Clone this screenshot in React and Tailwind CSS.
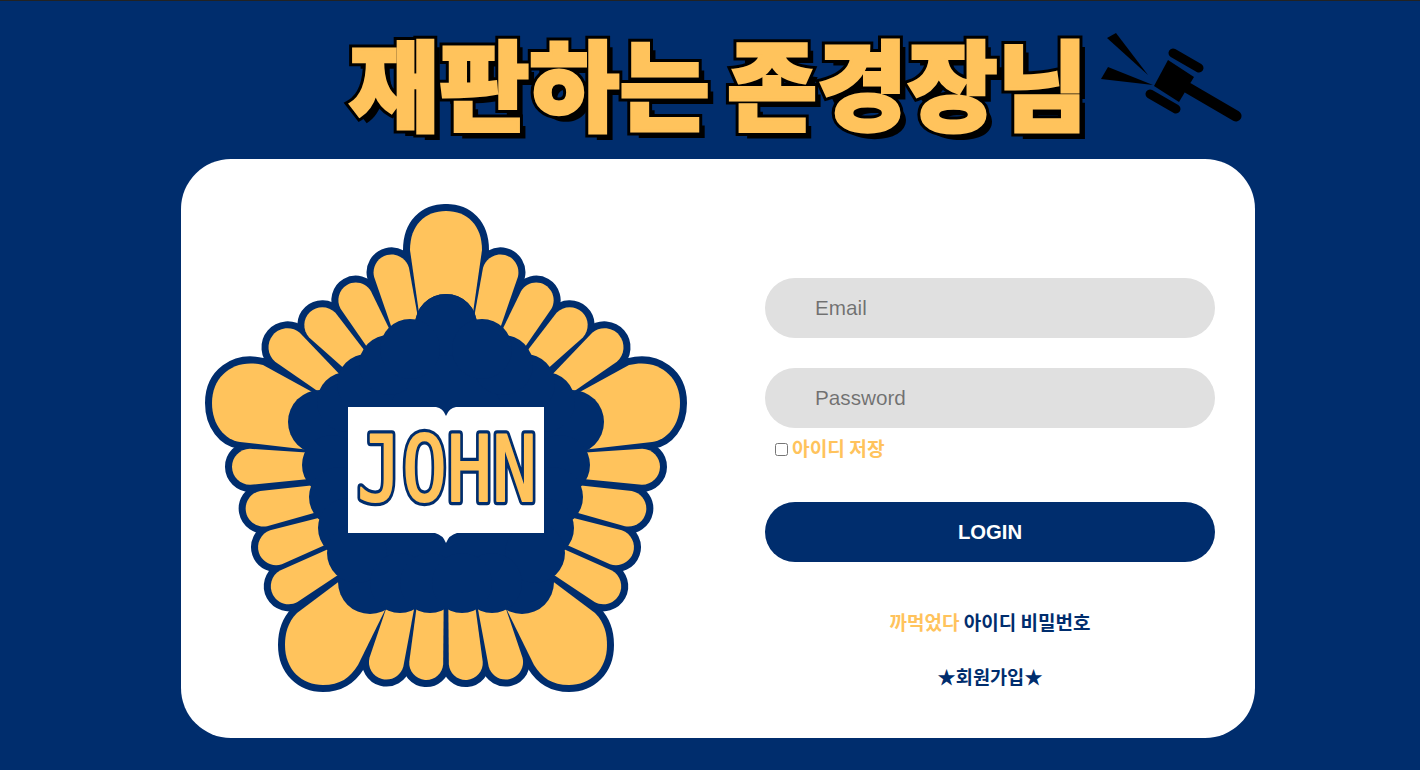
const NAVY = "#002d6d";
const GOLD = "#ffc35c";

// base centre, tip point, tip width, base width
const smallPetals = [
  [[327, 381], [273, 335], 38, 27],
  [[353, 358], [310, 312], 36, 27],
  [[378, 338], [347, 285], 35, 28],
  [[404, 320], [387, 255], 36, 28],
  [[302, 466], [232, 467], 36, 27],
  [[313, 499], [246, 512], 36, 27],
  [[323, 531], [259, 553], 36, 27],
  [[333, 562], [273, 595], 36, 27],
  [[400, 610], [382, 679], 35, 27],
  [[430, 610], [425, 680], 34, 27],
];

const bigPetals = [
  "M420,320 L410,250 C410,225 425,211 446,211 L446,320 Z",
  "M325,399 L263,365 C235,358 212,375 212,403 C212,425 225,440 240,442 L310,450 Z",
  "M345,577 L297,613 C287,623 285,635 285,645 C285,670 302,685 323,685 C340,685 350,678 358,665 L390,600 Z",
];

const bumps = [
  [446, 325, 31], [320, 422, 32], [370, 582, 32],
  [347, 402, 30], [367, 384, 30], [389, 365, 30], [410, 349, 30],
  [332, 465, 30], [339, 497, 30], [348, 528, 30], [357, 553, 30],
  [400, 583, 30], [430, 583, 30],
];

function petalPath([b, t, w, bw]) {
  const dx = t[0] - b[0];
  const dy = t[1] - b[1];
  const len = Math.hypot(dx, dy);
  const ux = dx / len;
  const uy = dy / len;
  const nx = -uy;
  const ny = ux;
  const p = (along, side) =>
    `${t[0] + ux * along + nx * side},${t[1] + uy * along + ny * side}`;
  const r = w / 2;
  const inner = bw - ((w - bw) / len) * 12;
  return [
    `M${p(-len - 12, -inner / 2)}`,
    `L${p(-r, -r)}`,
    `C${p(-r * 0.45, -r)} ${p(0, -r * 0.55)} ${p(0, 0)}`,
    `C${p(0, r * 0.55)} ${p(-r * 0.45, r)} ${p(-r, r)}`,
    `L${p(-len - 12, inner / 2)}`,
    "Z",
  ].join(" ");
}

function HalfEmblem({ layer }) {
  const style =
    layer === "outline"
      ? { fill: NAVY, stroke: NAVY, strokeWidth: 14, strokeLinejoin: "round" }
      : { fill: GOLD };
  return (
    <g {...style}>
      {bigPetals.map((d) => (
        <path key={d} d={d} />
      ))}
      {smallPetals.map((petal, i) => (
        <path key={i} d={petalPath(petal)} />
      ))}
    </g>
  );
}

function Emblem() {
  const letters = {
    x: "357",
    y: "501",
    fontSize: "90",
    textLength: "180",
    lengthAdjust: "spacingAndGlyphs",
    strokeLinejoin: "round",
    className: "[font-family:'DejaVu_Sans_Mono',monospace]",
  };
  return (
    <svg viewBox="205 204 484 490" className="w-[484px] h-[490px] shrink-0">
      <HalfEmblem layer="outline" />
      <g transform="matrix(-1 0 0 1 892 0)">
        <HalfEmblem layer="outline" />
      </g>
      <HalfEmblem layer="fill" />
      <g transform="matrix(-1 0 0 1 892 0)">
        <HalfEmblem layer="fill" />
      </g>
      <path
        d="M446,330 L340,400 L335,470 L350,570 L370,600 L522,600 L542,570 L557,470 L552,400 Z"
        fill={NAVY}
      />
      <g fill={NAVY}>
        {bumps.map(([cx, cy, r]) => (
          <g key={`${cx}-${cy}`}>
            <circle cx={cx} cy={cy} r={r} />
            <circle cx={892 - cx} cy={cy} r={r} />
          </g>
        ))}
      </g>
      <path
        d="M348,407 H436 Q443,408 446,416 Q449,408 456,407 H544 V533 H457 Q449,535 446,543 Q443,535 435,533 H348 Z"
        fill="#fff"
      />
      <text {...letters} fill={NAVY} stroke={NAVY} strokeWidth="8.5">
        JOHN
      </text>
      <text {...letters} fill={GOLD} stroke={GOLD} strokeWidth="2" aria-hidden="true">
        JOHN
      </text>
    </svg>
  );
}

function Gavel() {
  return (
    <svg viewBox="1095 28 150 100" className="w-[150px] h-[100px] shrink-0 ml-[8px] mt-[27px] blur-[0.4px]">
      <polygon points="1115,33 1106,38 1147,75" fill="#000" />
      <polygon points="1107,67 1100,79 1152,85" fill="#000" />
      <polygon points="1167,60 1193,77 1178,102 1153,86" fill="#000" />
      <g stroke="#000" strokeLinecap="round" fill="none">
        <line x1="1187" y1="88" x2="1235" y2="116" strokeWidth="11" />
        <line x1="1172" y1="53" x2="1198" y2="68" strokeWidth="9" />
        <line x1="1149" y1="94" x2="1175" y2="109" strokeWidth="9" />
      </g>
    </svg>
  );
}

export default function App() {
  return (
    <div className="min-h-[770px] bg-[#002d6d] border-t border-[#222] [font-family:'Noto_Sans_CJK_KR','Liberation_Sans',sans-serif]">
      <div className="flex h-[158px] pl-[349px]">
        <h1 className="relative mt-[19px] text-[98px] leading-[120px] font-black whitespace-nowrap [word-spacing:-5px] text-black [-webkit-text-stroke:9px_#000] [text-shadow:7px_7px_0_#000]">
          재판하는 존경장님
          <span
            aria-hidden="true"
            className="absolute left-0 top-0 text-[#ffc35c] [-webkit-text-stroke:3px_#ffc35c] [text-shadow:none]"
          >
            재판하는 존경장님
          </span>
        </h1>
        <Gavel />
      </div>

      <div className="ml-[181px] w-[1074px] h-[579px] bg-white rounded-[50px] flex pl-[24px] pt-[45px]">
        <Emblem />
        <form className="ml-[76px] w-[450px] pt-[74px] flex flex-col">
          <input
            type="text"
            placeholder="Email"
            className="h-[60px] rounded-full bg-[#e0e0e0] pl-[50px] text-[20.7px] outline-none [font-family:'Liberation_Sans',sans-serif]"
          />
          <input
            type="password"
            placeholder="Password"
            className="h-[60px] mt-[30px] rounded-full bg-[#e0e0e0] pl-[50px] text-[20.7px] outline-none [font-family:'Liberation_Sans',sans-serif]"
          />
          <label className="flex items-center h-[28px] mt-[6px] pl-[10px] text-[19.2px] font-bold text-[#ffc35c]">
            <input type="checkbox" className="mr-[4px] mt-[2px]" />
            아이디 저장
          </label>
          <button
            type="button"
            className="h-[60px] mt-[40px] rounded-full bg-[#002d6d] text-white text-[20.3px] font-bold [font-family:'Liberation_Sans',sans-serif]"
          >
            LOGIN
          </button>
          <p className="mt-[46px] text-center text-[19px] leading-[28px] font-bold text-[#002d6d]">
            <span className="text-[#ffc35c]">까먹었다</span> 아이디 비밀번호
          </p>
          <p className="mt-[26px] text-center text-[18.6px] leading-[28px] font-bold text-[#002d6d]">
            ★회원가입★
          </p>
        </form>
      </div>
    </div>
  );
}
